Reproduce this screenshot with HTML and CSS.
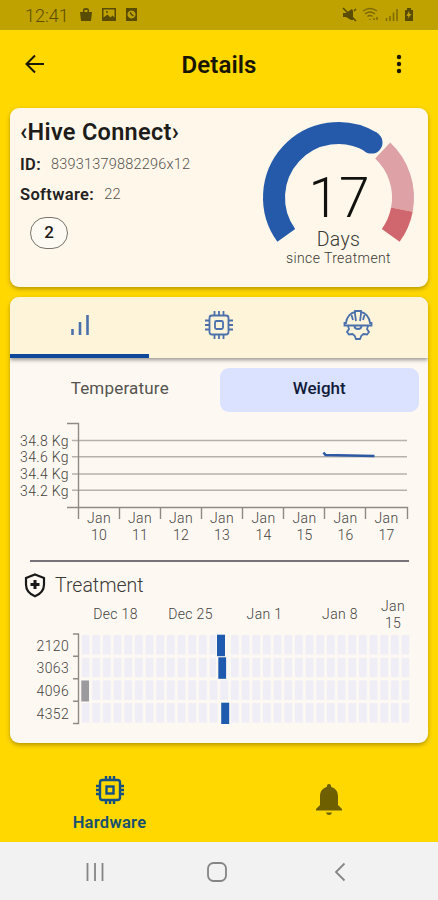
FILE: index.html
```html
<!DOCTYPE html>
<html lang="en">
<head>
    <meta charset="UTF-8">
    <meta name="viewport" content="width=device-width, initial-scale=1.0">
    <title>Details</title>
    <link rel="stylesheet" href="styles.css">
</head>
<body>
    <div class="status-bar">
        <span class="clock">12:41</span>
        <svg class="status-left" width="58" height="16" viewBox="0 0 58 16">
            <path d="M1 5h12l-1 9H2z M4 5V3q0-2 3-2t3 2v2H8.500V3h-3v2z"/>
            <path fill-rule="evenodd" d="M23 1h14v13H23z M24.500 2.500v8l4-3 3 3 2-2 2 2v-8z"/>
            <circle cx="28" cy="5" r="1"/>
            <path fill-rule="evenodd" d="M47 1h11v13H47z M52.500 3.500a4 4 0 1 0 .01 0z"/>
            <path class="thin" d="M51 5.500l1.500 2 2 1.500"/>
        </svg>
        <svg class="status-right" width="72" height="16" viewBox="0 0 72 16">
            <path d="M1 6h3l6-4 1 2v9l-2 0L4 10H1z"/>
            <path class="thin" d="M1 1l13 13M12 4l2-2"/>
            <path class="wifi" d="M21 4q7-5 14 0M23 7q5-4 10 0M25.500 9.500q2.500-2 5 0M28 12v1M32 13v-2M35 10v3"/>
            <path class="signal" d="M44.500 11v3M48 9v5M51.500 5.500v8.500M55 2v12"/>
            <path fill-rule="evenodd" d="M65 1h4v2h2v11h-8V3h2z M67 4l-2.500 5h2l-1 3 4-5h-2z"/>
        </svg>
    </div>

    <header class="app-bar">
        <svg width="20" height="20" viewBox="0 0 20 20">
            <path d="M19 10H2M10 1.500L1.500 10l8.500 8.500"/>
        </svg>
        <h1>Details</h1>
        <svg class="more" width="6" height="20" viewBox="0 0 6 20">
            <circle cx="3" cy="3" r="2.200"/>
            <circle cx="3" cy="10" r="2.200"/>
            <circle cx="3" cy="17" r="2.200"/>
        </svg>
    </header>

    <main>
        <!-- Device summary -->
        <section class="card device">
            <div class="device-info">
                <h2>‹Hive Connect›</h2>
                <p><b>ID:</b><span>83931379882296x12</span></p>
                <p><b>Software:</b><span>22</span></p>
                <div class="badge">2</div>
            </div>
            <svg class="gauge" width="151" height="150" viewBox="0 0 151 150">
                <path class="arc done" d="M23.300 113.400A64.500 64.500 0 0 1 108.500 20.100"/>
                <circle class="cap" cx="108.500" cy="20.600" r="11"/>
                <path class="arc left" d="M119.700 28.600A64.500 64.500 0 0 1 138.900 87.600"/>
                <path class="arc late" d="M138.900 87.600A64.500 64.500 0 0 1 127.700 113.400"/>
                <text class="gauge-value" x="76" y="94.500">17</text>
                <text class="gauge-unit" x="75.500" y="123.500">Days</text>
                <text class="gauge-note" x="75.500" y="141">since Treatment</text>
            </svg>
        </section>

        <!-- Measurements -->
        <section class="card charts">
            <nav class="tabs">
                <div class="tab active">
                    <svg width="20" height="22" viewBox="0 0 20 22">
                        <path class="bars" d="M2.500 15v6M10 8v13M17.500 1v20"/>
                    </svg>
                </div>
                <div class="tab">
                    <svg width="30" height="30" viewBox="0 0 30 30">
                        <rect x="5.500" y="5.500" width="19" height="19" rx="2.500"/>
                        <rect x="11" y="11" width="8" height="8" rx="1.500"/>
                        <path d="M10.500 5V1M15 5V1M19.500 5V1M10.500 29v-4M15 29v-4M19.500 29v-4M5 10.500H1M5 15H1M5 19.500H1M29 10.500h-4M29 15h-4M29 19.500h-4"/>
                    </svg>
                </div>
                <div class="tab">
                    <svg width="30" height="30" viewBox="0 0 30 30">
                        <path d="M1.500 15.500V13h1.500C3.500 7 8 2.500 12 2V1h6v1c4 .500 8.500 5 9 11h1.500v2.500z"/>
                        <path d="M12 2v2l1 7M18 2v2l-1 7M8.500 5l1.500 5M21.500 5L20 10M11.500 16c0 4 7 4 7 0"/>
                        <path d="M5 16l1 3-2 3 2 2.500 3.500-.500 2 1.500L13 29h4l1.500-3.500 2-1.500 3.500.500L26 22l-2-3 1-3"/>
                    </svg>
                </div>
            </nav>

            <div class="toggle">
                <div class="option">Temperature</div>
                <div class="option selected">Weight</div>
            </div>

            <svg class="weight-chart" width="418" height="140" viewBox="10 417 418 140">
                <path class="grid" d="M72 440.500H407M72 456.800H407M72 474H407M72 490.200H407"/>
                <path class="axis" d="M67 423.500H78.500V519M67 507.500H407.500V519M119.500 507v12M160.500 507v12M201.500 507v12M242.500 507v12M283.500 507v12M324.500 507v12M365.500 507v12"/>
                <path class="series" d="M323.500 452.500l2 2.500 49 .9"/>
                <g class="y-labels">
                    <text x="69" y="445.500">34.8 Kg</text>
                    <text x="69" y="462">34.6 Kg</text>
                    <text x="69" y="479">34.4 Kg</text>
                    <text x="69" y="495.500">34.2 Kg</text>
                </g>
                <g class="x-labels">
                    <text x="99" y="523">Jan</text><text x="99" y="540">10</text>
                    <text x="140" y="523">Jan</text><text x="140" y="540">11</text>
                    <text x="181" y="523">Jan</text><text x="181" y="540">12</text>
                    <text x="222" y="523">Jan</text><text x="222" y="540">13</text>
                    <text x="263.500" y="523">Jan</text><text x="263.500" y="540">14</text>
                    <text x="304.500" y="523">Jan</text><text x="304.500" y="540">15</text>
                    <text x="345.500" y="523">Jan</text><text x="345.500" y="540">16</text>
                    <text x="386.500" y="523">Jan</text><text x="386.500" y="540">17</text>
                </g>
            </svg>

            <div class="treatment-title">
                <svg width="22" height="25" viewBox="0 0 22 25">
                    <path d="M11 1.500L20 5v6.500c0 5.500-3.500 9.500-9 11.800-5.500-2.300-9-6.300-9-11.800V5z"/>
                    <path class="cross" d="M11 7v9M6.500 11.500h9"/>
                </svg>
                <h3>Treatment</h3>
            </div>

            <svg class="treatment-chart" width="418" height="135" viewBox="10 598 418 135">
                <defs>
                    <pattern id="days" x="81.500" y="635" width="10.670" height="22.700" patternUnits="userSpaceOnUse">
                        <rect class="day" width="8" height="19.500"/>
                    </pattern>
                </defs>
                <rect x="81.500" y="635" width="328" height="88" fill="url(#days)"/>
                <path class="axis" d="M73 634H78.500V723.500H73M73 656.300h5M73 678.700h5M73 701.200h5"/>
                <rect class="clear" x="216" y="634" width="14" height="45"/>
                <rect class="clear" x="219" y="702" width="11" height="22"/>
                <rect class="treated" x="217" y="634.700" width="8" height="21.500"/>
                <rect class="treated" x="218.300" y="657.300" width="7.800" height="21.500"/>
                <rect class="treated" x="221.200" y="702.700" width="8" height="21.300"/>
                <rect class="missed" x="81.300" y="680.500" width="7.700" height="21"/>
                <g class="x-labels">
                    <text x="115.500" y="619">Dec 18</text>
                    <text x="190.500" y="619">Dec 25</text>
                    <text x="264.500" y="619">Jan 1</text>
                    <text x="340" y="619">Jan 8</text>
                    <text x="393" y="610.500">Jan</text><text x="393" y="627.500">15</text>
                </g>
                <g class="y-labels">
                    <text x="69" y="650.500">2120</text>
                    <text x="69" y="673">3063</text>
                    <text x="69" y="696">4096</text>
                    <text x="69" y="718.500">4352</text>
                </g>
            </svg>
        </section>
    </main>

    <nav class="bottom-nav">
        <div class="nav-item active">
            <svg width="30" height="30" viewBox="0 0 30 30">
                <rect x="5" y="5" width="20" height="20" rx="2.500"/>
                <rect x="11.500" y="11.500" width="7" height="7"/>
                <path d="M11 5V1M15 5V1M19 5V1M11 29v-4M15 29v-4M19 29v-4M5 11H1M5 15H1M5 19H1M29 11h-4M29 15h-4M29 19h-4"/>
            </svg>
            <span>Hardware</span>
        </div>
        <div class="nav-item">
            <svg class="bell" width="28" height="33" viewBox="0 0 28 33">
                <path d="M14 1c1.500 0 2.200 1.300 2.200 3 4.300 1 6.800 4.500 6.800 9.500V22l4 4v1.500H1V26l4-4v-8.500c0-5 2.500-8.500 6.800-9.500 0-1.700.700-3 2.200-3z"/>
                <path d="M11 29.500h6c-.500 1.700-1.500 2.500-3 2.500s-2.500-.800-3-2.500z"/>
            </svg>
        </div>
    </nav>

    <div class="system-nav">
        <svg width="20" height="20" viewBox="0 0 20 20"><path d="M2.500 1v18M10 1v18M17.500 1v18"/></svg>
        <svg class="home" width="22" height="22" viewBox="0 0 22 22"><rect x="2" y="2" width="18" height="18" rx="5.500"/></svg>
        <svg width="12" height="20" viewBox="0 0 12 20"><path d="M10.500 1.500L2 10l8.500 8.500"/></svg>
    </div>
</body>
</html>
```
FILE: styles.css
```css
* {
    box-sizing: border-box;
}

body {
    margin: 0;
    height: 900px;
    display: flex;
    flex-direction: column;
    font-family: Roboto, "Liberation Sans", sans-serif;
    background-color: #ffd800;
    color: #1d1c1a;
    overflow: hidden;
}

svg {
    display: block;
    flex-shrink: 0;
}

h1, h2, h3, p {
    margin: 0;
}

/* Status bar */
.status-bar {
    height: 30px;
    padding: 0 24px 0 25px;
    display: flex;
    align-items: center;
    background-color: #bfa200;
    color: #5c4d00;
}

.clock {
    width: 54px;
    padding-top: 1px;
    font-size: 18px;
    font-weight: 300;
}

.status-bar svg {
    fill: #594b00;
}

.status-right {
    margin-left: auto;
}

.status-bar .thin {
    fill: none;
    stroke: #594b00;
    stroke-width: 1.5;
}

.status-bar .wifi,
.status-bar .signal {
    fill: none;
    stroke: #7d6a00;
    stroke-width: 1.5;
}

/* App bar */
.app-bar {
    height: 68px;
    padding: 0 36px 0 25px;
    display: flex;
    align-items: center;
    justify-content: space-between;
}

.app-bar svg {
    fill: none;
    stroke: #1a1700;
    stroke-width: 2;
}

.app-bar .more {
    fill: #1a1700;
    stroke: none;
}

.app-bar h1 {
    margin-right: 3px;
    padding-top: 2px;
    font-size: 24px;
    font-weight: 600;
    letter-spacing: 0.1px;
    color: #171500;
}

main {
    flex: 1;
    padding: 10px 10px 0;
    display: flex;
    flex-direction: column;
    gap: 10px;
}

.card {
    border-radius: 9px;
    box-shadow: 0 2px 4px rgba(70, 55, 0, 0.4);
    overflow: hidden;
}

/* Device summary */
.device {
    height: 179px;
    padding: 10px 14px 0 10px;
    display: flex;
    justify-content: space-between;
    background-color: #fff8ea;
}

.device h2 {
    font-size: 23.5px;
    font-weight: 600;
    line-height: 28px;
    letter-spacing: 0.3px;
    margin-bottom: 4px;
}

.device p {
    height: 29.5px;
    display: flex;
    align-items: center;
    gap: 10px;
    font-size: 14.5px;
    font-weight: 300;
    letter-spacing: 0.2px;
    color: #56534e;
}

.device b {
    font-size: 16.5px;
    font-weight: 600;
    letter-spacing: 0.35px;
    color: #24221f;
}

.badge {
    width: 38px;
    height: 32px;
    margin: 8px 0 0 10px;
    border: 1px solid #77736c;
    border-radius: 16px;
    background-color: #fdfaf4;
    font-size: 17px;
    font-weight: 500;
    line-height: 29px;
    text-align: center;
}

.gauge {
    margin-top: 4px;
    overflow: visible;
}

.arc {
    fill: none;
    stroke-width: 22;
}

.done {
    stroke: #255aaa;
}

.cap {
    fill: #255aaa;
}

.left {
    stroke: #dea1a5;
}

.late {
    stroke: #d1676e;
}

.gauge text {
    text-anchor: middle;
}

.gauge-value {
    font-size: 55px;
    font-weight: 300;
    fill: #11110f;
}

.gauge-unit {
    font-size: 19.5px;
    font-weight: 300;
    letter-spacing: 0.3px;
    fill: #3b3834;
}

.gauge-note {
    font-size: 14px;
    font-weight: 300;
    letter-spacing: 0.4px;
    fill: #3b3834;
}

/* Measurements card */
.charts {
    height: 446px;
    background-color: #fdf9f2;
}

.tabs {
    height: 61px;
    display: flex;
    background-color: #fdf4da;
    box-shadow: 0 2px 4px rgba(0, 0, 0, 0.4);
}

.tab {
    flex: 1;
    padding-bottom: 1px;
    display: flex;
    justify-content: center;
    align-items: center;
    border-bottom: 4px solid transparent;
}

.tab.active {
    border-bottom-color: #104899;
}

.tab svg {
    fill: none;
    stroke: #4b70ac;
    stroke-width: 1.8;
}

.tab .bars {
    stroke-width: 2.6;
}

.toggle {
    height: 44px;
    margin: 10px 9px 5px 10px;
    display: flex;
}

.option {
    flex: 1;
    border-radius: 9px;
    font-size: 17px;
    font-weight: 400;
    line-height: 41px;
    letter-spacing: 0.2px;
    text-align: center;
    color: #55534f;
}

.option.selected {
    background-color: #dae2ff;
    font-weight: 500;
    letter-spacing: 0;
    color: #111b39;
}

.grid {
    stroke: #b5b1ac;
    stroke-width: 1.5;
}

.axis {
    fill: none;
    stroke: #8e8a86;
    stroke-width: 1.4;
}

.series {
    fill: none;
    stroke: #2c58a4;
    stroke-width: 2.5;
}

.x-labels,
.y-labels {
    font-size: 14px;
    font-weight: 300;
    letter-spacing: 0.35px;
    fill: #45423e;
}

.x-labels {
    text-anchor: middle;
}

.y-labels {
    text-anchor: end;
}

/* Treatment */
.treatment-title {
    height: 38px;
    margin: 3px 19px 0 20px;
    padding-top: 11px;
    border-top: 2px solid #76747a;
    display: flex;
    align-items: center;
    gap: 9px;
}

.treatment-title svg {
    margin-left: -6px;
    fill: none;
    stroke: #191919;
    stroke-width: 2.2;
}

.treatment-title .cross {
    stroke-width: 3;
}

.treatment-title h3 {
    font-size: 19.5px;
    font-weight: 300;
    color: #3b3835;
}

.day {
    fill: #efeef7;
}

.clear {
    fill: #fdf9f2;
}

.treated {
    fill: #205aae;
}

.missed {
    fill: #9b9a9d;
}

/* Bottom navigation */
.bottom-nav {
    height: 81px;
    display: flex;
}

.nav-item {
    flex: 1;
    display: flex;
    flex-direction: column;
    align-items: center;
    justify-content: center;
    gap: 8px;
    padding-bottom: 4px;
    font-size: 16.5px;
    font-weight: 600;
    letter-spacing: 0.3px;
    color: #155070;
}

.nav-item.active {
    padding: 4px 0 0;
}

.nav-item svg {
    fill: none;
    stroke: #155084;
    stroke-width: 2.4;
}

.nav-item .bell {
    fill: #6e5f00;
    stroke: none;
}

/* System navigation */
.system-nav {
    height: 58px;
    padding: 2px 92px 0 85px;
    display: flex;
    align-items: center;
    justify-content: space-between;
    background-color: #f2f2f2;
}

.system-nav svg {
    fill: none;
    stroke: #858585;
    stroke-width: 1.8;
}

.system-nav .home {
    margin-right: 5px;
}
```
